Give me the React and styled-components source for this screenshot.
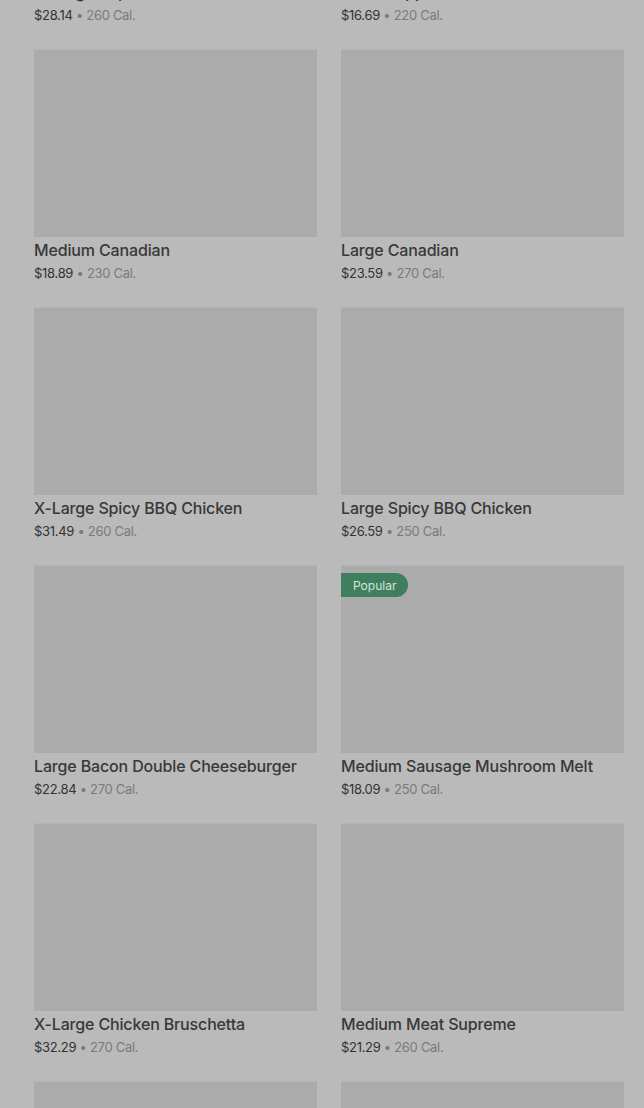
import React from "react";
import styled, { createGlobalStyle } from "styled-components";

const Global = createGlobalStyle`
  html, body { margin: 0; padding: 0; background: #bababa; }
  body { font-family: Inter, "Noto Sans", Roboto, sans-serif; overflow: hidden; }
`;

const Page = styled.div`
  width: 644px;
  height: 1108px;
  overflow: hidden;
  background: #bababa;
`;

const Grid = styled.div`
  display: grid;
  grid-template-columns: 283px 283px;
  column-gap: 24px;
  row-gap: 25px;
  padding: 0 20px 0 34px;
  margin-top: -209px;
`;

const Card = styled.div`
  display: flex;
  flex-direction: column;
`;

const Thumb = styled.div`
  position: relative;
  height: 188px;
  background: #ababab;
  box-shadow: inset 0 1px 0 #b4b4b4;
`;

const Badge = styled.span`
  position: absolute;
  top: 8px;
  left: 0;
  height: 24px;
  padding: 0 12px;
  display: flex;
  align-items: center;
  background: #3f7f5f;
  color: #d6e4da;
  font-size: 12px;
  border-radius: 0 12px 12px 0;
`;

const Name = styled.div`
  margin-top: 3px;
  font-size: 16px;
  line-height: 20px;
  font-weight: 500;
  letter-spacing: -0.15px;
  color: #383838;
  white-space: nowrap;
`;

const Meta = styled.div`
  margin-top: 4px;
  font-size: 13px;
  line-height: 18px;
  letter-spacing: -0.3px;
  color: #7a7a7a;
`;

const Price = styled.span`
  color: #333333;
`;

const items = [
  { name: "X-Large Supreme Pizza", price: "$28.14", cal: 260 },
  { name: "Small Pepperoni Pizza", price: "$16.69", cal: 220 },
  { name: "Medium Canadian", price: "$18.89", cal: 230 },
  { name: "Large Canadian", price: "$23.59", cal: 270 },
  { name: "X-Large Spicy BBQ Chicken", price: "$31.49", cal: 260 },
  { name: "Large Spicy BBQ Chicken", price: "$26.59", cal: 250 },
  { name: "Large Bacon Double Cheeseburger", price: "$22.84", cal: 270 },
  { name: "Medium Sausage Mushroom Melt", price: "$18.09", cal: 250, popular: true },
  { name: "X-Large Chicken Bruschetta", price: "$32.29", cal: 270 },
  { name: "Medium Meat Supreme", price: "$21.29", cal: 260 },
  { name: "Large Hawaiian", price: "$24.99", cal: 250 },
  { name: "Medium Hawaiian", price: "$19.49", cal: 240 },
];

export default function App() {
  return (
    <Page>
      <Global />
      <Grid>
        {items.map((it, i) => (
          <Card key={i}>
            <Thumb>{it.popular && <Badge>Popular</Badge>}</Thumb>
            <Name>{it.name}</Name>
            <Meta>
              <Price>{it.price}</Price> • {it.cal} Cal.
            </Meta>
          </Card>
        ))}
      </Grid>
    </Page>
  );
}
